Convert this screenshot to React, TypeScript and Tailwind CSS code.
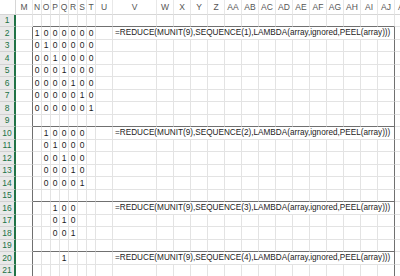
import React from "react";

const cols = [
  { name: "M", w: "w-[17px]" },
  ...["N", "O", "P", "Q", "R", "S", "T"].map((name) => ({ name, w: "w-[9px]" })),
  { name: "U", w: "w-[17px]" },
  { name: "V", w: "w-[44px]" },
  ...["W", "X", "Y", "Z", "AA", "AB", "AC", "AD", "AE", "AF", "AG", "AH", "AI", "AJ"].map(
    (name) => ({ name, w: "w-[17px]" })
  ),
];

const matrixCols = ["N", "O", "P", "Q", "R", "S", "T"];
const overflowCols = ["W", "X", "Y", "Z", "AA", "AB", "AC", "AD", "AE", "AF", "AG", "AH", "AI", "AJ"];

// identity blocks, each peeled one ring smaller
const blocks = [
  { start: 2, n: 7, first: 0, seq: 1 },
  { start: 10, n: 5, first: 1, seq: 2 },
  { start: 16, n: 3, first: 2, seq: 3 },
  { start: 20, n: 1, first: 3, seq: 4 },
];
const boxTops = blocks.map((b) => b.start);

const rows = Array.from({ length: 21 }, (_, i) => i + 1);

function cellValue(r: number, col: string) {
  const b = blocks.find((x) => r >= x.start && r < x.start + x.n);
  if (!b) return "";
  const c = matrixCols.indexOf(col);
  if (c < b.first || c >= b.first + b.n) return "";
  return r - b.start === c - b.first ? "1" : "0";
}

function formulaFor(r: number) {
  const b = blocks.find((x) => x.start === r);
  if (!b) return null;
  return `=REDUCE(MUNIT(9),SEQUENCE(${b.seq}),LAMBDA(array,ignored,PEEL(array)))`;
}

function HeaderRow() {
  return (
    <div className="flex h-[15px]">
      <div className="w-[16px] shrink-0 border-r border-b border-r-[#d6d6d6] border-b-[#d6d6d6]" />
      {cols.map((c) => (
        <div
          key={c.name}
          className={`${c.w} shrink-0 flex items-center justify-center border-r border-b border-r-[#e8e8e8] border-b-[#d6d6d6] text-[8.5px] text-[#555]`}
        >
          {c.name}
        </div>
      ))}
      <div className="flex-1 flex items-center pl-[3px] border-b border-b-[#d6d6d6] text-[8.5px] text-[#555]">
        A
      </div>
    </div>
  );
}

function SheetRow({ r }: { r: number }) {
  const h = r % 2 ? "h-[12px]" : "h-[13px]";
  const inBox = r >= 2;
  const nextTop = boxTops.includes(r + 1);
  const formula = formulaFor(r);

  const cells: React.ReactNode[] = [];
  for (const c of cols) {
    if (formula && overflowCols.includes(c.name)) continue;
    const boxCol = c.name !== "M";
    const rightDark = inBox && (c.name === "M" || c.name === "AJ" || (formula && c.name === "V"));
    const bottom = nextTop && boxCol ? "border-b-[#707070]" : "border-b-[#e3e3e3]";
    const right = rightDark ? "border-r-[#707070]" : "border-r-[#e3e3e3]";
    if (formula && c.name === "V") {
      cells.push(
        <div
          key={c.name}
          className={`w-[282px] shrink-0 flex items-center pl-[2px] whitespace-nowrap border-r border-b ${right} ${bottom} text-[8.2px] text-[#1c1c1c]`}
        >
          {formula}
        </div>
      );
      continue;
    }
    cells.push(
      <div
        key={c.name}
        className={`${c.w} shrink-0 flex items-center justify-center border-r border-b ${right} ${bottom} text-[8.5px] text-[#1c1c1c]`}
      >
        {cellValue(r, c.name)}
      </div>
    );
  }

  return (
    <div className={`flex ${h}`}>
      <div className="w-[16px] shrink-0 flex items-center justify-center bg-[#e9e9e9] border-r-2 border-r-[#217346] border-b border-b-[#d2d2d2] text-[8.5px] text-[#217346]">
        {r}
      </div>
      {cells}
      <div className="flex-1 border-b border-b-[#e3e3e3]" />
    </div>
  );
}

export default function App() {
  return (
    <div className="w-[400px] h-[276px] overflow-hidden bg-white font-['Liberation_Sans',Arial,sans-serif] leading-none">
      <HeaderRow />
      {rows.map((r) => (
        <SheetRow key={r} r={r} />
      ))}
    </div>
  );
}
